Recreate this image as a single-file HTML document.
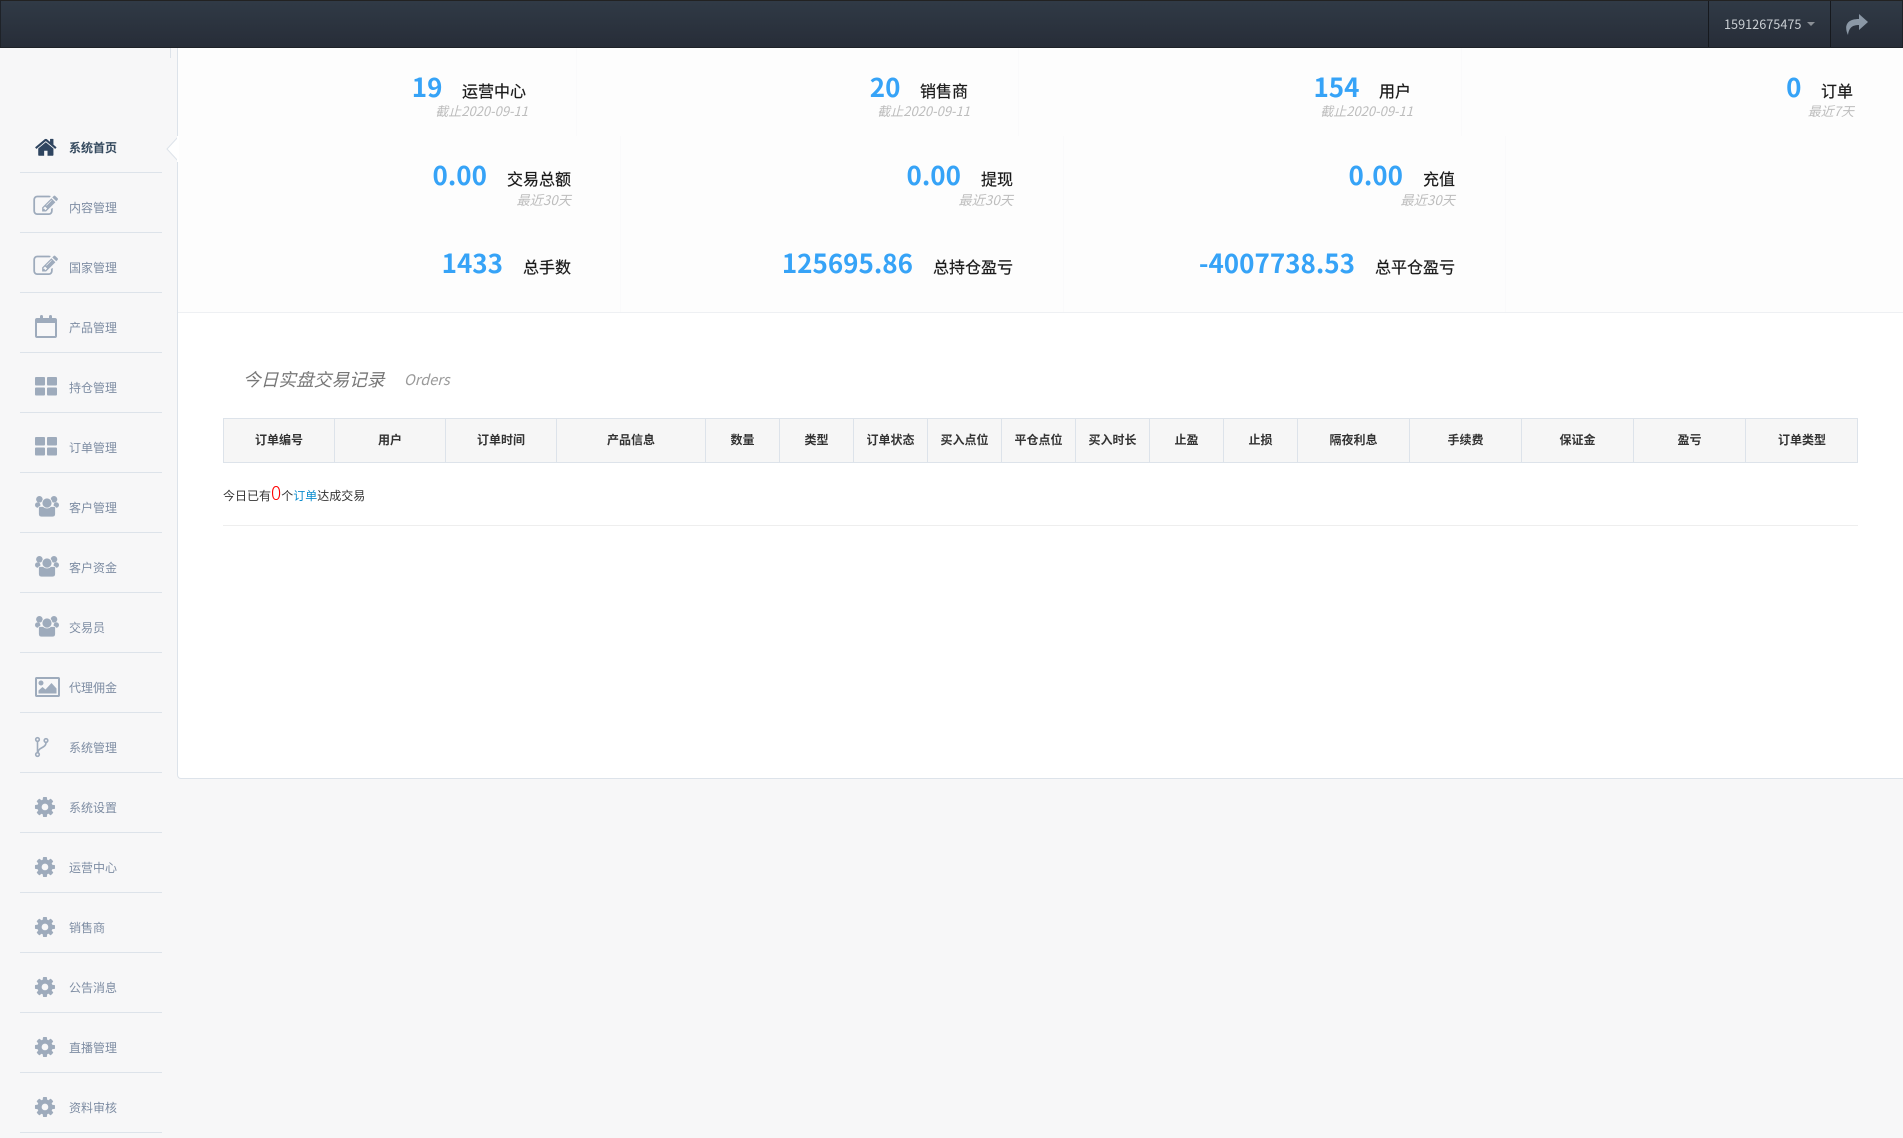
<!DOCTYPE html>
<html lang="zh">
<head>
<meta charset="utf-8">
<title>系统首页</title>
<style>
html,body{margin:0;padding:0}
body{width:1903px;height:1138px;overflow:hidden;position:relative;background:#f7f7f8;font-family:"Liberation Sans","Noto Sans CJK SC",sans-serif;font-size:12px;color:#333}
.abs,.top,.main,.item,.sep,.stat,.sub,.th,.vl{position:absolute}
.top{left:0;top:0;width:1903px;height:48px;box-sizing:border-box;background:linear-gradient(#303a46,#272d38);border:1px solid #1e2228;border-top-color:#222}
.vl{top:1px;height:46px;width:1px;background:#16191e}
.user{position:absolute;left:1724px;top:14px;line-height:20px;font-size:12.7px;color:#c9ced3;font-family:"Noto Sans CJK SC",sans-serif}
.main{left:177px;top:48px;width:1726px;height:731px;box-sizing:border-box;background:#fff;border-left:1px solid #dde3ea;border-bottom:1px solid #dde3ea;border-bottom-left-radius:4px}
.statbg{position:absolute;left:178px;top:48px;width:1725px;height:264px;background:#fdfdfd;border-bottom:1px solid #eef0f3}
.item{left:69px;width:90px;line-height:20px;font-size:12px;color:#7e8da3;font-family:"Noto Sans CJK SC",sans-serif}
.item.on{color:#34495e;font-weight:700}
.sep{left:20px;width:142px;height:1px;background:#dde3ea}
.stat{text-align:right;white-space:nowrap;line-height:32px;color:#1a1a1a;font-size:16px;font-family:"Noto Sans CJK SC",sans-serif;-webkit-text-stroke:.2px #1a1a1a}
.stat b{color:#36a3f7;font-size:26px;margin-right:20px;font-weight:700;position:relative;top:0;-webkit-text-stroke:0}
.r1 b{margin-right:19.5px}
.sub{text-align:right;white-space:nowrap;font-style:italic;font-size:13px;line-height:18px;color:#bdbdbd;font-family:"Noto Sans CJK SC",sans-serif}
.fl{position:absolute;width:1px;background:#fafafb}
.tbl{position:absolute;left:223px;top:418px;width:1635px;height:45px;box-sizing:border-box;background:#f6f6f6;border:1px solid #dde3ea}
.th{top:418px;height:45px;line-height:44px;text-align:center;font-size:12px;font-weight:700;color:#333;box-sizing:border-box;border-right:1px solid #dde3ea;font-family:"Noto Sans CJK SC",sans-serif}
</style>
</head>
<body>
<div class="main"></div>
<div class="statbg"></div>
<div class="fl" style="left:576px;top:48px;height:88px"></div>
<div class="fl" style="left:1018px;top:48px;height:88px"></div>
<div class="fl" style="left:1461px;top:48px;height:88px"></div>
<div class="fl" style="left:620px;top:136px;height:176px"></div>
<div class="fl" style="left:1063px;top:136px;height:176px"></div>
<div class="fl" style="left:1505px;top:136px;height:176px"></div>

<div class="top"></div>
<div class="vl" style="left:1708px"></div>
<div class="vl" style="left:1830px"></div>
<div class="user">15912675475</div>
<svg class="abs" style="left:1807px;top:22px" width="8" height="5"><path d="M0 0h8L4 4z" fill="#8a8f96"/></svg>
<svg class="abs" style="left:1845px;top:14px" width="23" height="21" viewBox="0 0 23 21"><path d="M14 0l9 8-9 8v-5c-6 0-10 2-11 10C0 15-1 5 14 5z" fill="#8b98a6"/></svg>

<div class="abs" style="left:170px;top:48px;width:1px;height:10px;background:#dde3ea"></div>

<!-- active notch -->
<svg class="abs" style="left:165px;top:136px" width="14" height="26"><path d="M13 1L2 13l11 12z" fill="#fff" stroke="#dde3ea"/><path d="M13 0v26" stroke="#fff" stroke-width="2"/></svg>

<!-- Sidebar icons -->
<svg class="abs" style="left:0;top:0" width="178" height="1138">
<defs>
<path id="cog" d="M1152 896q0-106-75-181t-181-75-181 75-75 181 75 181 181 75 181-75 75-181zm512-109v222q0 12-8 23t-20 13l-185 28q-19 54-39 91 35 50 107 138 10 12 10 25t-9 23q-27 37-99 108t-94 71q-12 0-26-9l-138-108q-44 23-91 38-16 136-29 186-7 28-36 28h-222q-14 0-24.5-8.5t-11.5-21.5l-28-184q-49-16-90-37l-141 107q-10 9-25 9-14 0-25-11-126-114-165-168-7-10-7-23 0-12 8-23 15-21 51-66.5t54-70.5q-27-50-41-99l-183-27q-13-2-21-12.5t-8-23.5v-222q0-12 8-23t19-13l186-28q14-46 39-92-40-57-107-138-10-12-10-24 0-10 9-23 26-36 98.5-107.5t94.5-71.5q13 0 26 10l138 107q44-23 91-38 16-136 29-186 7-28 36-28h222q14 0 24.5 8.5t11.5 21.5l28 184q49 16 90 37l142-107q9-9 24-9 13 0 25 10 129 119 165 170 7 8 7 22 0 12-8 23-15 21-51 66.5t-54 70.5q26 50 41 98l183 28q13 2 22 12.5t9 23.5z"/>
<path id="edit" d="M888 1184l116-116-152-152-116 116v56h96v96h56zm440-720q-16-16-33 1l-350 350q-17 17-1 33t33-1l350-350q17-17 1-33zm80 594v190q0 119-84.5 203.5t-203.5 84.5h-832q-119 0-203.5-84.5t-84.5-203.5v-832q0-119 84.5-203.5t203.5-84.5h832q63 0 117 25 15 7 18 23 3 17-9 29l-49 49q-14 14-32 8-23-6-45-6h-832q-66 0-113 47t-47 113v832q0 66 47 113t113 47h832q66 0 113-47t47-113v-126q0-13 9-22l64-64q15-15 35-7t20 29zm-96-738l288 288-672 672h-288v-288zm444 132l-92 92-288-288 92-92q28-28 68-28t68 28l152 152q28 28 28 68t-28 68z"/>
<g id="th"><rect x="0" y="0" width="10" height="8.5" rx="1"/><rect x="12" y="0" width="10" height="8.5" rx="1"/><rect x="0" y="10.5" width="10" height="8" rx="1"/><rect x="12" y="10.5" width="10" height="8" rx="1"/></g>
<g id="grp"><circle cx="4.4" cy="4.3" r="3.3"/><circle cx="19" cy="4.3" r="3.3"/><circle cx="2.7" cy="10" r="2.7"/><circle cx="21.3" cy="10" r="2.7"/><path stroke="#f7f7f8" stroke-width=".8" d="M3.500 13c0-1 1-1.500 2-1.500h13c1 0 2 .5 2 1.500v6c0 2-1 3-3 3H6.500c-2 0-3-1-3-3z"/><circle cx="12" cy="8" r="5" stroke="#f7f7f8" stroke-width=".8"/></g>
</defs>
<g fill="#9eabbc">
<path fill="#2f4560" transform="translate(34,135.500) scale(.0132)" d="M1472 992v480q0 26-19 45t-45 19h-384v-384h-256v384h-384q-26 0-45-19t-19-45v-480q0-1 .5-3t.5-3l575-474 575 474q1 2 1 6zm223-69l-62 74q-8 9-21 11h-3q-13 0-21-7l-692-577-692 577q-12 8-24 7-13-2-21-11l-62-74q-8-10-7-23.500t11-21.500l719-599q32-26 76-26t76 26l244 204v-195q0-14 9-23t23-9h192q14 0 23 9t9 23v408l219 182q10 8 11 21.500t-7 23.500z"/>
<use href="#edit" transform="translate(33.300,193.800) scale(.0138)"/>
<use href="#edit" transform="translate(33.300,253.800) scale(.0138)"/>
<g transform="translate(35,315)"><path fill-rule="evenodd" d="M2 3h3V1.500C5 .5 5.500 0 6.500 0S8 .5 8 1.500V3h6V1.500C14 .5 14.500 0 15.500 0S17 .5 17 1.500V3h3c1.200 0 2 .8 2 2v16c0 1.200-.8 2-2 2H2c-1.200 0-2-.8-2-2V5c0-1.200.8-2 2-2zm0 5v13h18V8z"/></g>
<use href="#th" transform="translate(35,377)"/>
<use href="#th" transform="translate(35,437)"/>
<use href="#grp" transform="translate(35,495)"/>
<use href="#grp" transform="translate(35,555)"/>
<use href="#grp" transform="translate(35,615)"/>
<g transform="translate(35,677)"><path fill-rule="evenodd" d="M1.500 0h22c.8 0 1.500.7 1.500 1.500v17c0 .8-.7 1.500-1.500 1.500h-22C.7 20 0 19.300 0 18.500v-17C0 .7.7 0 1.500 0zM2 2v16h21V2z"/><circle cx="6" cy="6" r="2.500"/><path d="M3.500 16.500v-3l4-3.500 3 2.500 6-6.500 5 5.500v5z"/></g>
<g transform="translate(35,737)" fill="none" stroke="#9eabbc" stroke-width="1.600"><circle cx="2.500" cy="2.500" r="1.800"/><circle cx="2.500" cy="17.500" r="1.800"/><circle cx="11" cy="3.500" r="1.800"/><path d="M2.500 4.500v11M11 5.500c0 6-8 4.500-8 10"/></g>
<use href="#cog" transform="translate(33.300,795.300) scale(.01302)"/>
<use href="#cog" transform="translate(33.300,855.300) scale(.01302)"/>
<use href="#cog" transform="translate(33.300,915.300) scale(.01302)"/>
<use href="#cog" transform="translate(33.300,975.300) scale(.01302)"/>
<use href="#cog" transform="translate(33.300,1035.300) scale(.01302)"/>
<use href="#cog" transform="translate(33.300,1095.300) scale(.01302)"/>
</g>
</svg>

<div class="item on" style="top:138px">系统首页</div>
<div class="item" style="top:198px">内容管理</div>
<div class="item" style="top:258px">国家管理</div>
<div class="item" style="top:318px">产品管理</div>
<div class="item" style="top:378px">持仓管理</div>
<div class="item" style="top:438px">订单管理</div>
<div class="item" style="top:498px">客户管理</div>
<div class="item" style="top:558px">客户资金</div>
<div class="item" style="top:618px">交易员</div>
<div class="item" style="top:678px">代理佣金</div>
<div class="item" style="top:738px">系统管理</div>
<div class="item" style="top:798px">系统设置</div>
<div class="item" style="top:858px">运营中心</div>
<div class="item" style="top:918px">销售商</div>
<div class="item" style="top:978px">公告消息</div>
<div class="item" style="top:1038px">直播管理</div>
<div class="item" style="top:1098px">资料审核</div>

<div class="sep" style="top:172px"></div><div class="sep" style="top:232px"></div><div class="sep" style="top:292px"></div><div class="sep" style="top:352px"></div><div class="sep" style="top:412px"></div><div class="sep" style="top:472px"></div><div class="sep" style="top:532px"></div><div class="sep" style="top:592px"></div><div class="sep" style="top:652px"></div><div class="sep" style="top:712px"></div><div class="sep" style="top:772px"></div><div class="sep" style="top:832px"></div><div class="sep" style="top:892px"></div><div class="sep" style="top:952px"></div><div class="sep" style="top:1012px"></div><div class="sep" style="top:1072px"></div><div class="sep" style="top:1132px"></div>

<!-- Stats -->
<div class="stat r1" style="right:1377px;top:71px"><b>19</b>运营中心</div>
<div class="sub" style="right:1375px;top:102px">截止2020-09-11</div>
<div class="stat r1" style="right:935px;top:71px"><b>20</b>销售商</div>
<div class="sub" style="right:933px;top:102px">截止2020-09-11</div>
<div class="stat r1" style="right:492px;top:71px"><b>154</b>用户</div>
<div class="sub" style="right:490px;top:102px">截止2020-09-11</div>
<div class="stat r1" style="right:50px;top:71px"><b>0</b>订单</div>
<div class="sub" style="right:49px;top:102px">最近7天</div>

<div class="stat" style="right:1332px;top:159px"><b>0.00</b>交易总额</div>
<div class="sub" style="right:1332px;top:191px;font-size:13.3px">最近30天</div>
<div class="stat" style="right:890px;top:159px"><b>0.00</b>提现</div>
<div class="sub" style="right:890px;top:191px;font-size:13.3px">最近30天</div>
<div class="stat" style="right:448px;top:159px"><b>0.00</b>充值</div>
<div class="sub" style="right:448px;top:191px;font-size:13.3px">最近30天</div>

<div class="stat" style="right:1332px;top:247px"><b>1433</b>总手数</div>
<div class="stat" style="right:890px;top:247px"><b>125695.86</b>总持仓盈亏</div>
<div class="stat" style="right:448px;top:247px"><b>-4007738.53</b>总平仓盈亏</div>

<!-- Section title -->
<div class="abs" style="left:243px;top:366px;font-size:17.7px;line-height:26px;font-style:italic;color:#777;font-family:'Noto Sans CJK SC',sans-serif;white-space:nowrap">今日实盘交易记录</div>
<div class="abs" style="left:404px;top:369px;font-size:14.5px;line-height:22px;font-style:italic;color:#9a9a9a;font-family:'Noto Sans CJK SC',sans-serif;white-space:nowrap">Orders</div>

<!-- Table -->
<div class="tbl"></div>
<div class="th" style="left:224px;width:111px">订单编号</div>
<div class="th" style="left:335px;width:111px">用户</div>
<div class="th" style="left:446px;width:111px">订单时间</div>
<div class="th" style="left:557px;width:149px">产品信息</div>
<div class="th" style="left:706px;width:74px">数量</div>
<div class="th" style="left:780px;width:74px">类型</div>
<div class="th" style="left:854px;width:74px">订单状态</div>
<div class="th" style="left:928px;width:74px">买入点位</div>
<div class="th" style="left:1002px;width:74px">平仓点位</div>
<div class="th" style="left:1076px;width:74px">买入时长</div>
<div class="th" style="left:1150px;width:74px">止盈</div>
<div class="th" style="left:1224px;width:74px">止损</div>
<div class="th" style="left:1298px;width:112px">隔夜利息</div>
<div class="th" style="left:1410px;width:112px">手续费</div>
<div class="th" style="left:1522px;width:112px">保证金</div>
<div class="th" style="left:1634px;width:112px">盈亏</div>
<div class="th" style="left:1746px;width:112px;border-right:0">订单类型</div>

<div class="abs" style="left:223px;top:483px;font-size:12px;line-height:24px;color:#333;white-space:nowrap;font-family:'Noto Sans CJK SC',sans-serif">今日已有<span style="color:#f00;font-size:19px;line-height:20px;font-weight:300">0</span>个<span style="color:#0d8ecf">订单</span>达成交易</div>
<div class="abs" style="left:223px;top:525px;width:1635px;height:1px;background:#eee"></div>
</body>
</html>
